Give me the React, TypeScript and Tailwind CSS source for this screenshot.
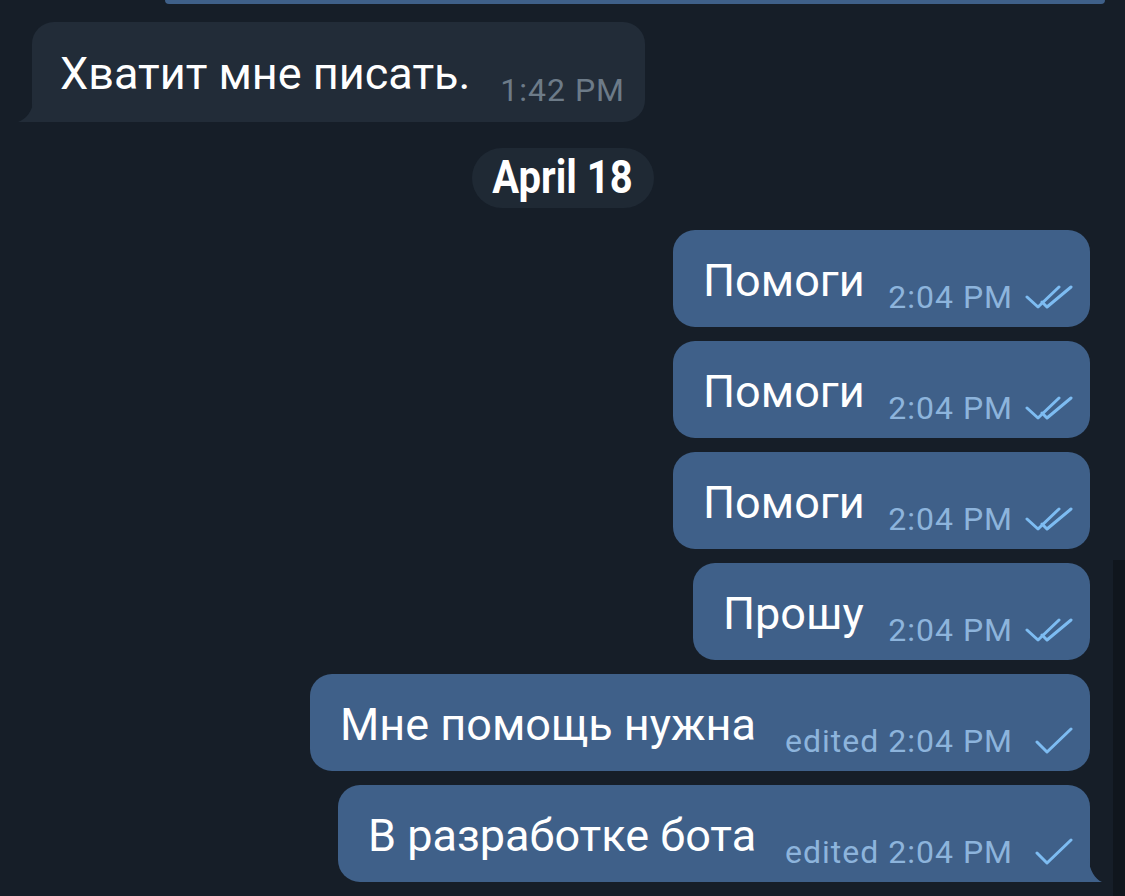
const sent = [
  { text: "Помоги", time: "2:04 PM", edited: false, width: "w-[417px]" },
  { text: "Помоги", time: "2:04 PM", edited: false, width: "w-[417px]" },
  { text: "Помоги", time: "2:04 PM", edited: false, width: "w-[417px]" },
  { text: "Прошу", time: "2:04 PM", edited: false, width: "w-[397px]" },
  { text: "Мне помощь нужна", time: "edited 2:04 PM", edited: true, width: "w-[780px]" },
  { text: "В разработке бота", time: "edited 2:04 PM", edited: true, width: "w-[752px]", tail: true },
];

function Checks({ double }: { double: boolean }) {
  return double ? (
    <svg width="48" height="26" viewBox="0 0 48 26" fill="none" stroke="#7dbcf2" strokeWidth="3" strokeLinecap="round" strokeLinejoin="round">
      <path d="M2 13l11 10L34 3" />
      <path d="M17 18l5 5L46 3" />
    </svg>
  ) : (
    <svg width="38" height="28" viewBox="0 0 38 28" fill="none" stroke="#7dbcf2" strokeWidth="3" strokeLinecap="round" strokeLinejoin="round">
      <path d="M2 15l10 10L36 2" />
    </svg>
  );
}

export default function App() {
  return (
    <div className="relative w-[1125px] h-[896px] overflow-hidden bg-[#161e28] font-['Roboto',sans-serif] flex flex-col">
      {/* bottom of the previous outgoing message */}
      <div className="h-[4px] ml-[165px] mr-[20px] bg-[#3f6089] rounded-b-[6px] shrink-0" />

      <div className="mt-[18px] ml-[32px] relative w-[613px] h-[100px] bg-[#222c38] rounded-[22px] rounded-bl-none flex items-end pl-[28px] pr-[20px] pb-[22px]">
        <svg className="absolute left-[-14px] bottom-0" width="16" height="22" viewBox="0 0 16 22">
          <path d="M16 0 V22 H0 C8 19 14 12 16 0 Z" fill="#222c38" />
        </svg>
        <span className="text-[45px] leading-[52px] text-white">Хватит мне писать.</span>
        <span className="ml-auto text-[32px] leading-[32px] tracking-[1px] text-[#6d7b88] mb-[-6px]">1:42 PM</span>
      </div>

      <div className="mt-[26px] self-center h-[60px] w-[182px] rounded-full bg-[#1f2934] flex items-center justify-center">
        <span className="text-[40px] leading-[40px] font-bold text-white scale-y-[1.15]">April 18</span>
      </div>

      <div className="mt-[22px] flex flex-col items-end gap-[14px] pr-[35px]">
        {sent.map((m, i) => (
          <div
            key={i}
            className={`relative ${m.width} h-[97px] bg-[#3f6089] rounded-[22px] ${m.tail ? "rounded-br-none" : ""} flex items-end pl-[30px] pr-[17px] pb-[20px]`}
          >
            {m.tail && (
              <svg className="absolute right-[-12px] bottom-0" width="14" height="24" viewBox="0 0 14 24">
                <path d="M0 0 V24 H14 C7 21 2 13 0 0 Z" fill="#3f6089" />
              </svg>
            )}
            <span className="text-[45px] leading-[52px] text-white">{m.text}</span>
            <span className={`ml-auto flex items-end ${m.edited ? "gap-[22px]" : "gap-[12px]"}`}>
              <span className="text-[32px] leading-[32px] tracking-[1px] text-[#8db4dc] mb-[-6px]">{m.time}</span>
              <span className={m.edited ? "mb-[-4px]" : "mb-[-3px]"}>
                <Checks double={!m.edited} />
              </span>
            </span>
          </div>
        ))}
      </div>

      {/* scrollbar track */}
      <div className="absolute right-0 top-[560px] bottom-0 w-[12px] bg-[#10161d]" />
    </div>
  );
}
